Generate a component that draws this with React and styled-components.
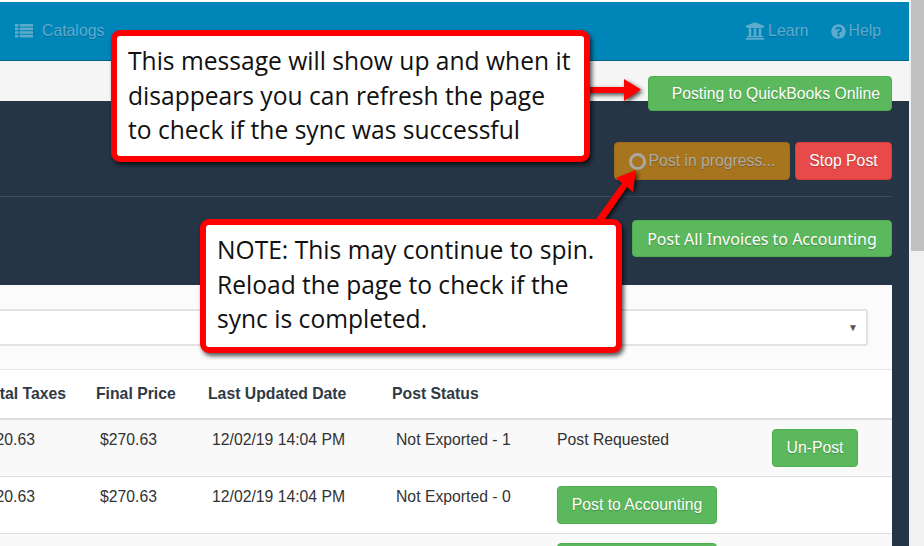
import React from 'react';
import styled, { createGlobalStyle } from 'styled-components';
import { FaUniversity, FaQuestionCircle } from 'react-icons/fa';

const Global = createGlobalStyle`
  html, body { margin: 0; padding: 0; height: 546px; overflow: hidden; background: #fff; }
  body { font-family: "Liberation Sans", Arial, sans-serif; }
`;

const Frame = styled.div`
  position: relative;
  width: 924px;
  height: 546px;
  overflow: hidden;
  display: flex;
`;

const Page = styled.div`
  width: 909px;
  height: 546px;
  padding-top: 2px;
  box-sizing: border-box;
  display: flex;
  flex-direction: column;
  overflow: hidden;
`;

const Scrollbar = styled.div`
  width: 15px;
  background: #f1f1f1;
  padding-left: 2px;
  box-sizing: border-box;
`;

const Thumb = styled.div`
  height: 251px;
  background: #c1c1c1;
`;

const Navbar = styled.nav`
  height: 59px;
  flex: none;
  box-sizing: border-box;
  background: #0085b8;
  border-bottom: 1px solid #0a5f80;
  display: flex;
  align-items: center;
  justify-content: space-between;
  padding: 0 28px 0 15px;
`;

const NavGroup = styled.div`
  display: flex;
  gap: 22px;
`;

const NavItem = styled.a`
  display: flex;
  align-items: center;
  gap: ${p => p.$gap || 3}px;
  color: #5eabcd;
  font-size: 15.8px;
  text-shadow: 0 1px 0 rgba(0, 0, 0, 0.2);
`;

const SubBar = styled.div`
  height: 40px;
  flex: none;
  background: #f5f5f5;
  border-radius: 0 3px 3px 0;
  display: flex;
  justify-content: flex-end;
  align-items: flex-start;
  padding: 15px 17px 0 0;
  box-sizing: border-box;
`;

const Button = styled.button`
  box-sizing: border-box;
  height: ${p => p.$h || 38}px;
  width: ${p => p.$w}px;
  padding: 0;
  background: ${p => p.$bg || '#5cb85c'};
  border: 1px solid ${p => p.$line || '#4cae4c'};
  border-radius: 4px;
  color: ${p => p.$fg || '#fff'};
  font-family: ${p => p.$font || '"Liberation Sans", Arial, sans-serif'};
  font-size: ${p => p.$size || 15.75}px;
  text-shadow: 0 1px 1px rgba(0, 0, 0, 0.25);
  display: flex;
  align-items: center;
  justify-content: center;
  flex: none;
`;

const ToastButton = styled(Button)`
  position: relative;
  z-index: 1;
  justify-content: flex-end;
  padding: 1px 11px 0 0;
`;

const Dark = styled.div`
  flex: 1;
  background: #253545;
  padding-right: 17px;
  display: flex;
  flex-direction: column;
  min-height: 0;
`;

const PostRow = styled.div`
  flex: none;
  height: 96px;
  box-sizing: border-box;
  border-bottom: 1px solid #3b4b5b;
  display: flex;
  justify-content: flex-end;
  gap: 5px;
  padding-top: 41px;
`;

const AccountRow = styled.div`
  flex: none;
  height: 88px;
  box-sizing: border-box;
  display: flex;
  justify-content: flex-end;
  padding-top: 23px;
`;

const Spinner = styled.span`
  width: 11px;
  height: 11px;
  border: 3px solid #a9a9a2;
  border-radius: 50%;
  margin: 1px 3px 0 0;
  flex: none;
`;

const Panel = styled.section`
  flex: 1;
  background: #fff;
  border-radius: 0 4px 0 0;
  display: flex;
  flex-direction: column;
  min-height: 0;
`;

const FilterArea = styled.div`
  height: 85px;
  flex: none;
  box-sizing: border-box;
  background: #fbfbfb;
  border-bottom: 1px solid #e7e7e7;
  padding: 24px 24px 0 0;
`;

const Select = styled.div`
  height: 37px;
  box-sizing: border-box;
  background: #fff;
  border: 2px solid #e2e2e2;
  border-left: none;
  border-radius: 0 3px 3px 0;
  display: flex;
  align-items: center;
  justify-content: flex-end;
  padding-right: 8px;
  color: #555;
  font-size: 10px;
`;

const COLS = '96px 112px 184px 165px 215px 1fr';

const HeaderRow = styled.div`
  display: grid;
  grid-template-columns: ${COLS};
  height: 50px;
  flex: none;
  box-sizing: border-box;
  border-bottom: 2px solid #ddd;
  align-items: center;
  font-weight: bold;
  font-size: 15.75px;
  color: #2f3a45;
`;

const BodyRow = styled.div`
  display: grid;
  grid-template-columns: ${COLS};
  height: 57px;
  flex: none;
  box-sizing: border-box;
  border-bottom: 1px solid #ddd;
  background: ${p => (p.$alt ? '#f9f9f9' : '#fff')};
  font-size: 15.75px;
  color: #333;
`;

const Clipped = styled.div`
  display: flex;
  justify-content: flex-end;
  white-space: nowrap;
  padding-right: 30px;
  min-width: 0;
`;

const ClippedValue = styled(Clipped)`
  padding: 11px 61px 0 0;
`;

const Cell = styled.div`
  padding: 11px 0 0 ${p => p.$indent ?? 4}px;
  white-space: nowrap;
`;

const ButtonCell = styled.div`
  padding-top: 9px;
`;

const Callout = styled.div`
  position: absolute;
  left: ${p => p.$x}px;
  top: ${p => p.$y}px;
  width: ${p => p.$w}px;
  height: ${p => p.$h}px;
  box-sizing: border-box;
  background: #fff;
  border: 6px solid #f00;
  border-radius: 9px;
  box-shadow: 2px 3px 4px rgba(0, 0, 0, 0.65);
  color: #111;
  font-family: "Open Sans", "Noto Sans", sans-serif;
  font-size: 24.6px;
  line-height: 34.5px;
  padding: 8px 0 0 11px;
  white-space: nowrap;
`;

const Arrows = styled.svg`
  position: absolute;
  left: 0;
  top: 0;
  overflow: visible;
  filter: drop-shadow(2px 2px 2px rgba(0, 0, 0, 0.7));
`;

const ListIcon = () => (
  <svg width="18" height="14" viewBox="0 0 18 14" fill="currentColor">
    {[0, 3.6, 7.2, 10.8].map(y => (
      <g key={y}>
        <rect x="0" y={y} width="3.4" height="2.6" />
        <rect x="4.6" y={y} width="13.4" height="2.6" />
      </g>
    ))}
  </svg>
);

const rows = [
  { alt: true, status: 'Not Exported - 1', requested: true },
  { alt: false, status: 'Not Exported - 0' },
  { alt: true, hidden: true },
];

export default function App() {
  return (
    <>
      <Global />
      <Frame>
        <Page>
          <Navbar>
            <NavItem $gap={9}><ListIcon /> Catalogs</NavItem>
            <NavGroup>
              <NavItem><FaUniversity size={20} /> Learn</NavItem>
              <NavItem><FaQuestionCircle size={15} /> Help</NavItem>
            </NavGroup>
          </Navbar>
          <SubBar>
            <ToastButton $w={244} $h={35}>Posting to QuickBooks Online</ToastButton>
          </SubBar>
          <Dark>
            <PostRow>
              <Button $w={176} $bg="#a8751f" $line="#9c6c1c" $fg="#aeaca4">
                <Spinner />Post in progress...
              </Button>
              <Button $w={97} $bg="#e84a4a" $line="#d43f3a">Stop Post</Button>
            </PostRow>
            <AccountRow>
              <Button $w={260} $h={37} $font={'"Noto Sans", sans-serif'} $size={16}>
                Post All Invoices to Accounting
              </Button>
            </AccountRow>
            <Panel>
              <FilterArea>
                <Select>▼</Select>
              </FilterArea>
              <HeaderRow>
                <Clipped>Total Taxes</Clipped>
                <div>Final Price</div>
                <div>Last Updated Date</div>
                <div>Post Status</div>
                <div />
                <div />
              </HeaderRow>
              {rows.map((r, i) => (
                <BodyRow key={i} $alt={r.alt}>
                  <ClippedValue>{!r.hidden && '$20.63'}</ClippedValue>
                  <Cell>{!r.hidden && '$270.63'}</Cell>
                  <Cell>{!r.hidden && '12/02/19 14:04 PM'}</Cell>
                  <Cell>{r.status}</Cell>
                  {r.requested ? <Cell $indent={0}>Post Requested</Cell> : (
                    <ButtonCell>
                      <Button $w={160}>{!r.hidden && 'Post to Accounting'}</Button>
                    </ButtonCell>
                  )}
                  {r.requested ? (
                    <ButtonCell>
                      <Button $w={86}>Un-Post</Button>
                    </ButtonCell>
                  ) : <div />}
                </BodyRow>
              ))}
            </Panel>
          </Dark>
        </Page>
        <Scrollbar><Thumb /></Scrollbar>

        <Arrows width="924" height="546">
          <path d="M586 87 H624 V79 L641 89.5 L624 101 V93 H586 Z" fill="#f00" />
          <path d="M594 222 L622 183 L616 178 L636 170 L633 192 L627 187 L603 222 Z" fill="#f00" />
        </Arrows>

        <Callout $x={111} $y={30} $w={479} $h={132}>
          This message will show up and when it<br />
          disappears you can refresh the page<br />
          to check if the sync was successful
        </Callout>
        <Callout $x={200} $y={219} $w={422} $h={134}>
          NOTE: This may continue to spin.<br />
          Reload the page to check if the<br />
          sync is completed.
        </Callout>
      </Frame>
    </>
  );
}
